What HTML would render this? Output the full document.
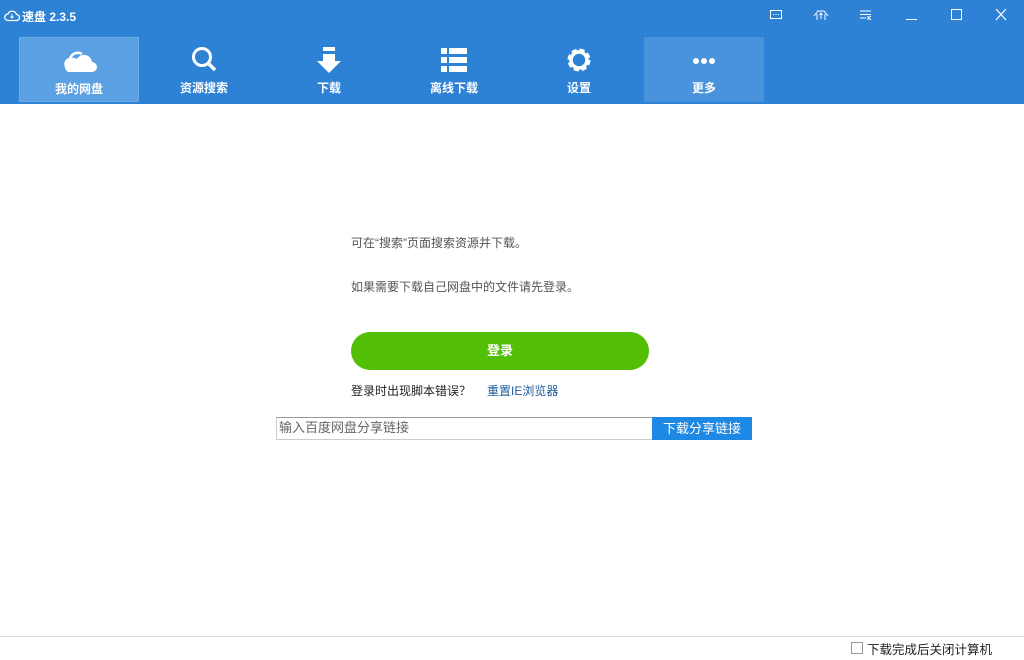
<!DOCTYPE html>
<html><head><meta charset="utf-8"><style>
*{margin:0;padding:0;box-sizing:border-box}
body{width:1024px;height:660px;background:#fff;font-family:"Liberation Sans","Noto Sans CJK SC",sans-serif;position:relative;overflow:hidden}
.hdr{position:absolute;left:0;top:0;width:1024px;height:104px;background:#2d82d6}
.title{position:absolute;left:22px;top:8px;color:#fff;font-size:12px;font-weight:bold}
.tab{position:absolute;top:37px;width:120px;height:65px;color:#fff;font-size:12px;font-weight:bold;text-align:center}
.tab.a{background:#5aa0e2;border:1px solid #6aaae6}
.tab.m{background:#4893dc}
.tab span{position:absolute;left:0;right:0;top:42px}
.tab svg{position:absolute;left:42px;top:8px}
.t{position:absolute;color:#555;font-size:12px}
.btn{position:absolute;left:351px;top:332px;width:298px;height:38px;border-radius:19px;background:#52be04;color:#fff;font-size:13px;font-weight:bold;text-align:center;line-height:38px}
.wc{position:absolute;top:8px}
</style></head><body>
<div class="hdr">
<svg style="position:absolute;left:4px;top:9px" width="16" height="13" viewBox="0 0 16 13"><path d="M4 11.5H12.5A3 3 0 0 0 12.5 5.5A4.5 4.5 0 0 0 4 5A3.2 3.2 0 0 0 4 11.5Z" fill="none" stroke="#fff" stroke-width="1.3"/><path d="M8 5v4M6.5 7.5L8 9L9.5 7.5" stroke="#fff" fill="none"/></svg>
<div class="title">速盘 2.3.5</div>
<svg class="wc" style="left:769px" width="14" height="14" viewBox="0 0 14 14"><rect x="1.5" y="2.5" width="11" height="8" fill="none" stroke="#fff"/><path d="M4 6.5h1M6.5 6.5h1M9 6.5h1" stroke="#fff"/></svg>
<svg class="wc" style="left:813px" width="16" height="14" viewBox="0 0 16 14"><path d="M1 8L5 3H11L15 8M4 6V12M12 6V12M8 5v6M6.5 7L8 5L9.5 7" fill="none" stroke="#fff"/></svg>
<svg class="wc" style="left:859px" width="14" height="14" viewBox="0 0 14 14"><path d="M1 3h11M1 6.5h11M1 10h6M9 8v4M9 10l3-2M10 10l2 2" fill="none" stroke="#fff"/></svg>
<div style="position:absolute;left:906px;top:19px;width:11px;height:1px;background:#fff"></div>
<div style="position:absolute;left:951px;top:9px;width:11px;height:11px;border:1px solid #fff"></div>
<svg class="wc" style="left:994px" width="14" height="14" viewBox="0 0 14 14"><path d="M2 1L12 12M12 1L2 12" stroke="#fff" stroke-width="1.2"/></svg>
<div class="tab a" style="left:19px"><svg width="36" height="30" viewBox="0 0 36 30"><path d="M6 26H30A5 5 0 0 0 30 16A8 8 0 0 0 15 13A6 6 0 0 0 6 26Z" fill="#fff"/><path d="M4 20A5 5 0 0 1 8 13A8 8 0 0 1 20 8" fill="none" stroke="#fff" stroke-width="2.5"/></svg><span>我的网盘</span></div>
<div class="tab" style="left:144px"><svg width="36" height="32" viewBox="0 0 36 32"><circle cx="16" cy="12" r="8.5" fill="none" stroke="#fff" stroke-width="3"/><path d="M22 18L29 25" stroke="#fff" stroke-width="3.5"/></svg><span>资源搜索</span></div>
<div class="tab" style="left:269px"><svg width="36" height="32" viewBox="0 0 36 32"><rect x="12" y="2" width="12" height="4" fill="#fff"/><path d="M12 9H24V16H30L18 28L6 16H12Z" fill="#fff"/></svg><span>下载</span></div>
<div class="tab" style="left:394px"><svg width="36" height="32" viewBox="0 0 36 32" fill="#fff"><rect x="5" y="3" width="6" height="6"/><rect x="13" y="3" width="18" height="6"/><rect x="5" y="12" width="6" height="6"/><rect x="13" y="12" width="18" height="6"/><rect x="5" y="21" width="6" height="6"/><rect x="13" y="21" width="18" height="6"/></svg><span>离线下载</span></div>
<div class="tab" style="left:519px"><svg width="36" height="32" viewBox="0 0 36 32"><circle cx="18" cy="15" r="9" fill="none" stroke="#fff" stroke-width="5" stroke-dasharray="4.5 2.6"/><circle cx="18" cy="15" r="8" fill="none" stroke="#fff" stroke-width="3.5"/></svg><span>设置</span></div>
<div class="tab m" style="left:644px"><svg width="36" height="32" viewBox="0 0 36 32" fill="#fff"><circle cx="10" cy="16" r="3"/><circle cx="18" cy="16" r="3"/><circle cx="26" cy="16" r="3"/></svg><span>更多</span></div>
</div>
<div class="t" style="left:351px;top:234px">可在“搜索”页面搜索资源并下载。</div>
<div class="t" style="left:351px;top:278px">如果需要下载自己网盘中的文件请先登录。</div>
<div class="btn">登录</div>
<div class="t" style="left:351px;top:382px;color:#222">登录时出现脚本错误？</div>
<div class="t" style="left:487px;top:382px;color:#1d5b9c">重置IE浏览器</div>
<div style="position:absolute;left:276px;top:417px;width:377px;height:23px;border:1px solid #ccc;border-top-color:#999;color:#666;font-size:13px;padding:0 2px;line-height:20px">输入百度网盘分享链接</div>
<div style="position:absolute;left:652px;top:417px;width:100px;height:23px;background:#1e88e5;color:#fff;font-size:13px;text-align:center;line-height:23px">下载分享链接</div>
<div style="position:absolute;left:0;top:636px;width:1024px;height:1px;background:#ddd"></div>
<div style="position:absolute;left:851px;top:642px;width:12px;height:12px;border:1px solid #999;background:#fff"></div>
<div class="t" style="left:867px;top:639px;color:#222;font-size:12.5px">下载完成后关闭计算机</div>
</body></html>
